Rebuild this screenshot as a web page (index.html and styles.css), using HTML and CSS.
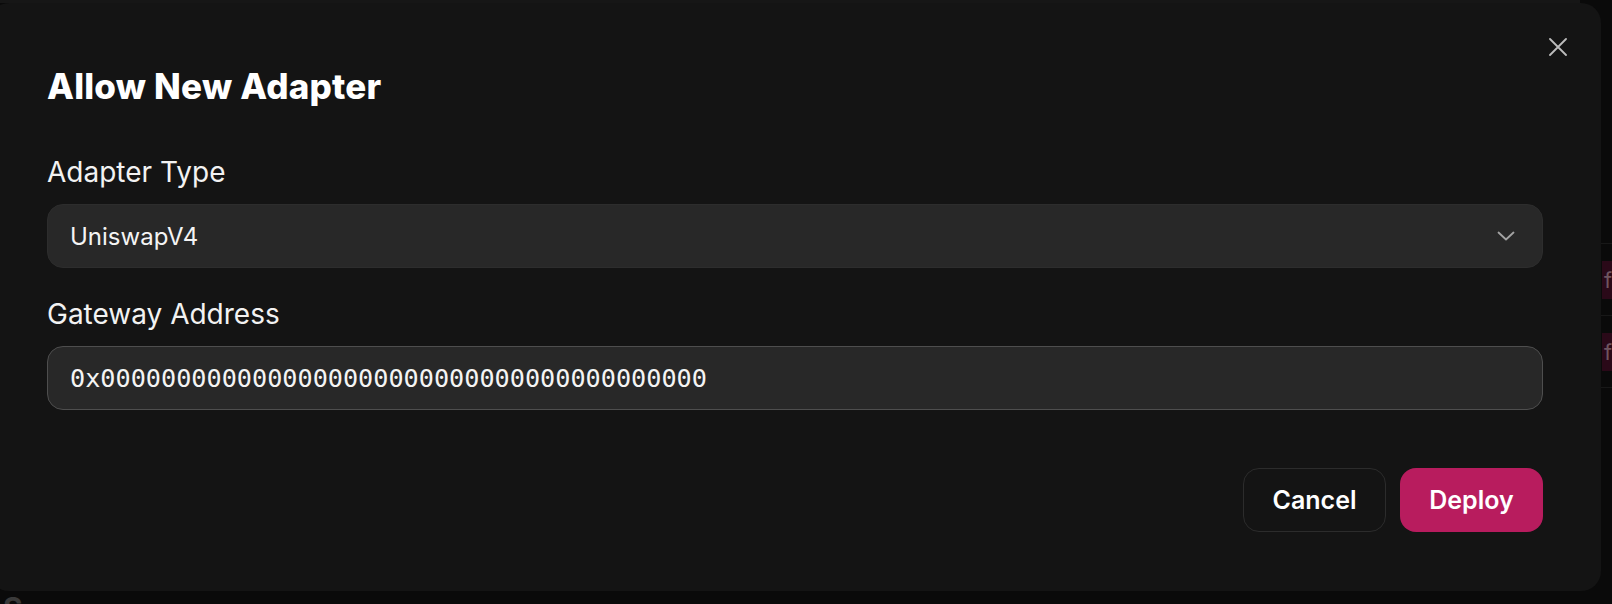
FILE: index.html
```html
<!DOCTYPE html>
<html lang="en">
<head>
<meta charset="utf-8">
<title>Allow New Adapter</title>
<link rel="stylesheet" href="styles.css">
</head>
<body>
<div class="page">
  <div class="topbar"></div>
  <div class="table">
    <div class="row"><span class="chip">fi</span></div>
    <div class="row"><span class="chip">fi</span></div>
    <div class="row"></div>
  </div>
  <h2 class="section">S</h2>
</div>

<div class="modal" role="dialog" aria-labelledby="modal-title">
  <button class="close" aria-label="Close">
    <svg width="18" height="18" viewBox="0 0 18 18" fill="none" stroke="currentColor" stroke-width="1.8" stroke-linecap="round">
      <path d="M1 1L17 17M17 1L1 17"/>
    </svg>
  </button>
  <h1 class="title" id="modal-title">Allow New Adapter</h1>
  <div class="field">
    <label class="label">Adapter Type</label>
    <div class="select">
      <span>UniswapV4</span>
      <svg class="chev" width="18" height="10" viewBox="0 0 18 10" fill="none" stroke="currentColor" stroke-width="1.8" stroke-linecap="round" stroke-linejoin="round">
        <path d="M1.5 1.5L9 8.5L16.5 1.5"/>
      </svg>
    </div>
  </div>
  <div class="field">
    <label class="label">Gateway Address</label>
    <div class="input">0x0000000000000000000000000000000000000000</div>
  </div>
  <div class="actions">
    <button class="btn btn-cancel">Cancel</button>
    <button class="btn btn-deploy">Deploy</button>
  </div>
</div>
</body>
</html>
```
FILE: styles.css
```css
* { box-sizing: border-box; }
html, body { margin: 0; padding: 0; }
body {
  background: #0a0a0a;
  font-family: "Inter", "Liberation Sans", sans-serif;
  color: #fff;
  width: 1612px;
  height: 604px;
  overflow: hidden;
}
.page {
  position: relative;
  height: 604px;
  overflow: hidden;
}
.topbar {
  height: 3px;
  width: 1580px;
  background: #161616;
}
.table {
  margin-top: 240px;
  margin-left: 1000px;
  width: 612px;
}
.row {
  height: 72px;
  border-top: 1px solid #181818;
  display: flex;
  align-items: center;
  padding-left: 602px;
}
.row:last-child { height: 1px; }
.chip {
  display: inline-block;
  height: 38px;
  line-height: 38px;
  padding: 0 0 0 2px;
  background: #2a0918;
  color: #6e5560;
  font-size: 22px;
  white-space: nowrap;
}
.section {
  margin: 202px 0 0;
  padding-left: 3px;
  font-size: 30px;
  line-height: 36px;
  font-weight: 700;
  color: #3a3a3a;
}

.modal {
  position: fixed;
  left: -11px;
  top: 3px;
  width: 1612px;
  height: 588px;
  background: #141414;
  border-radius: 20px;
  padding: 63px 58px 59px 58px;
  display: flex;
  flex-direction: column;
}
.close {
  position: absolute;
  top: 35px;
  right: 34px;
  width: 18px;
  height: 18px;
  padding: 0;
  border: 0;
  background: none;
  color: #bdbdbd;
  display: flex;
}
.title {
  margin: 0 0 50px;
  font-size: 35px;
  line-height: 40px;
  font-weight: 800;
  letter-spacing: 0.2px;
  color: #fff;
}
.field {
  display: flex;
  flex-direction: column;
}
.field + .field { margin-top: 30px; }
.label {
  font-size: 28px;
  line-height: 32px;
  margin-bottom: 16px;
  color: #f2f2f2;
}
.select, .input {
  height: 64px;
  border-radius: 16px;
  background: #282828;
  display: flex;
  align-items: center;
  padding: 0 22px;
  font-size: 24px;
  color: #f4f4f4;
}
.select {
  justify-content: space-between;
  border: 1px solid #2d2d2d;
}
.chev { color: #a3a3a3; margin-right: 5px; }
.input {
  border: 1px solid #4e4e4e;
  font-family: "DejaVu Sans Mono", monospace;
  font-size: 25.2px;
}
.actions {
  margin-top: 58px;
  display: flex;
  justify-content: flex-end;
  gap: 14px;
}
.btn {
  width: 143px;
  height: 64px;
  border-radius: 16px;
  font-family: "Inter", "Liberation Sans", sans-serif;
  font-size: 25px;
  font-weight: 600;
  color: #fff;
  cursor: pointer;
}
.btn-cancel {
  background: #141414;
  border: 1px solid #2c2c2c;
}
.btn-deploy {
  background: #b81c5e;
  border: 0;
}
```
